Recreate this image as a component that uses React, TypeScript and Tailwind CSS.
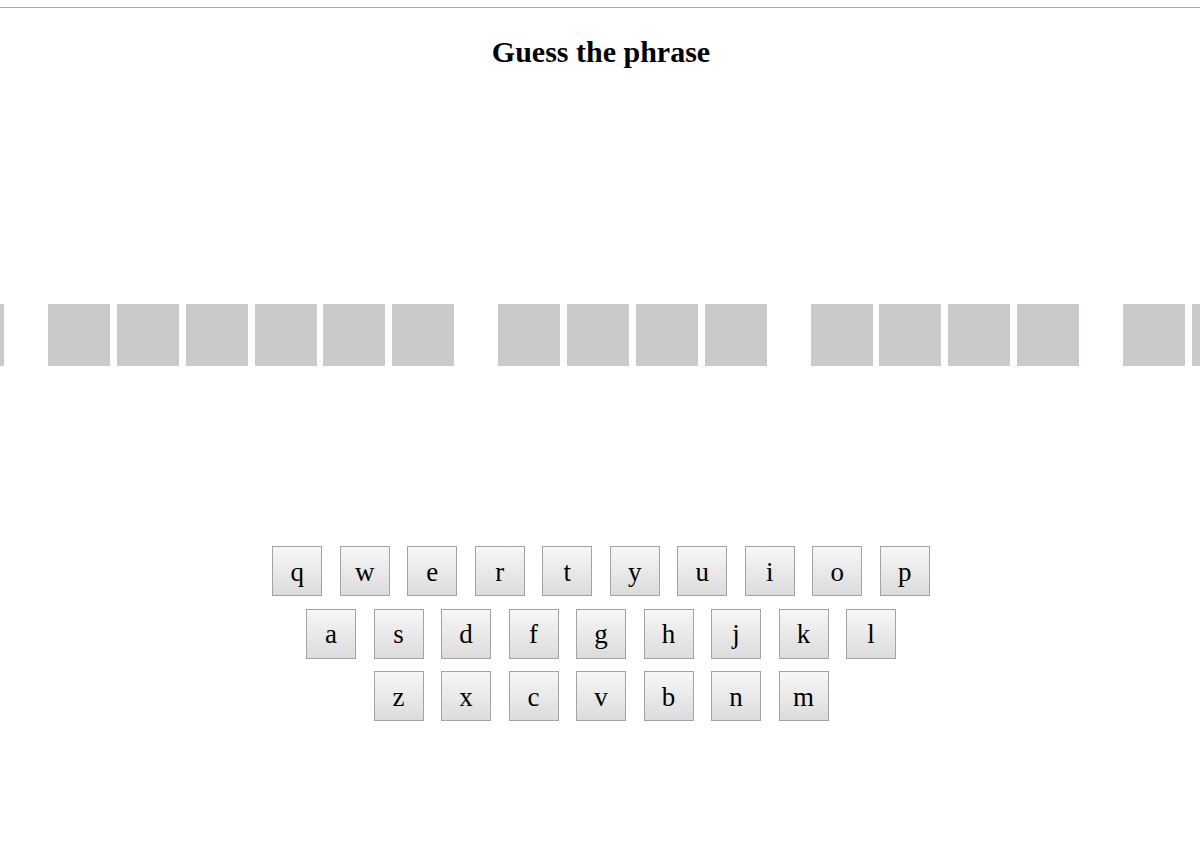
const PHRASE = "ab cdefgh ijkl mnop qrs";

const ROWS = [
  ["q", "w", "e", "r", "t", "y", "u", "i", "o", "p"],
  ["a", "s", "d", "f", "g", "h", "j", "k", "l"],
  ["z", "x", "c", "v", "b", "n", "m"],
];

export default function App() {
  return (
    <div className="min-h-[850px] bg-white font-['Liberation_Serif',serif] text-black">
      <div className="h-[7px]" />
      <div className="border-t border-[#aaaaaa]" />

      {/* Header */}
      <h2 className="mt-[26px] pl-[2px] text-center text-[30px] font-bold leading-[36px]">
        Guess the phrase
      </h2>

      {/* Phrase */}
      <div className="mt-[234px] flex justify-center gap-[6.8px] overflow-hidden pr-[4px]">
        {PHRASE.split("").map((ch, i) =>
          ch === " " ? (
            <div key={i} className="w-[30.4px] shrink-0" />
          ) : (
            <div key={i} className="h-[62px] w-[62px] shrink-0 bg-[#cbc9ca]" />
          )
        )}
      </div>

      {/* Keyboard */}
      <div className="mt-[180px] flex flex-col items-center gap-[12.5px] pl-[2px]">
        {ROWS.map((row, r) => (
          <div key={r} className="flex gap-[17.5px]">
            {row.map((k) => (
              <button
                key={k}
                className="flex h-[50px] w-[50px] items-center justify-center border border-[#a3a3a3] bg-gradient-to-b from-[#f7f7f7] to-[#dcdcdc] pt-[2px] text-[27px] leading-none"
              >
                {k}
              </button>
            ))}
          </div>
        ))}
      </div>
    </div>
  );
}
